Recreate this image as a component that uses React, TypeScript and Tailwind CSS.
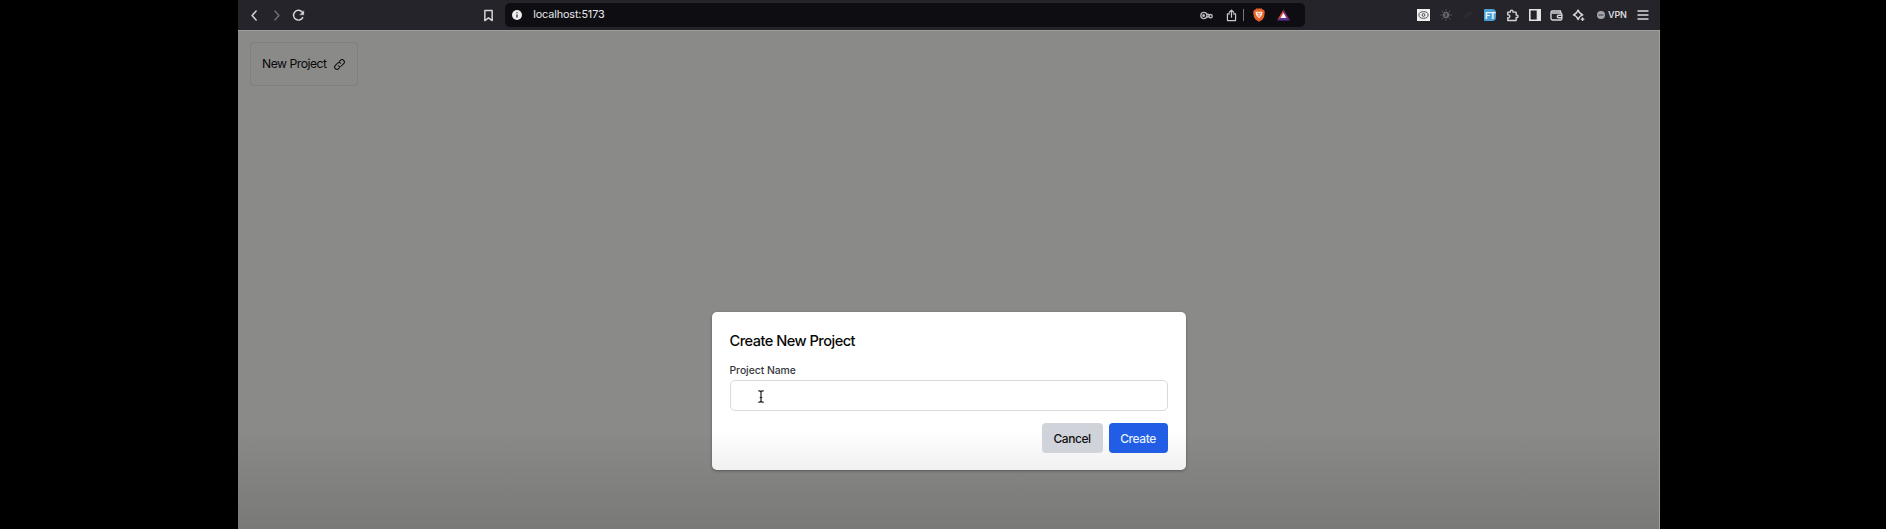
import type { ReactNode } from "react";

function Slot({ children }: { children?: ReactNode }) {
  return <span className="flex h-full w-[22.2px] shrink-0 items-center justify-center">{children}</span>;
}

function Stroke({ children, size = 13, width = 1.5, className = "" }: { children: ReactNode; size?: number; width?: number; className?: string }) {
  return (
    <svg width={size} height={size} viewBox="0 0 16 16" fill="none" stroke="currentColor" strokeWidth={width} strokeLinecap="round" strokeLinejoin="round" className={`shrink-0 ${className}`}>
      {children}
    </svg>
  );
}

function AddressBar() {
  return (
    <div className="ml-[6px] flex h-6 w-[800px] items-center rounded-[5px] bg-[#0e0d12] pl-[7px]">
      <svg width="10" height="10" viewBox="0 0 10 10" className="shrink-0">
        <circle cx="5" cy="5" r="5" fill="#ececee" />
        <path d="M5 4.4v3.1M5 2.3v1" stroke="#1a191f" strokeWidth="1.2" />
      </svg>
      <span className="ml-[11px] w-[661px] text-[10.8px] tracking-[-0.1px] text-[#e8e8ea]">localhost:5173</span>
      <span className="ml-[6px] flex items-center text-[#b6b6bb]">
        <Stroke size={13} width={1.7}>
          <circle cx="4.8" cy="8" r="3.8" />
          <circle cx="4.4" cy="8" r="1" />
          <path d="M8.4 6.4h1.8l1.200 1.200M8.400 9.800h1.500l1.300-1.300" />
          <circle cx="13" cy="8.8" r="2" />
        </Stroke>
      </span>
      <span className="ml-[12px] flex items-center text-[#c9c9cd]">
        <Stroke size={13}>
          <path d="M5.5 6H3v8.2h10V6h-2.500M8 10V1.500M5.300 4 8 1.400 10.700 4" />
        </Stroke>
      </span>
      <span className="ml-[5px] h-3 w-px bg-[#77777c]" />
      <svg width="12" height="14" viewBox="0 0 12 14" className="ml-[9px] shrink-0">
        <path d="M3.2.6h5.6l1 1.1 1.3.2.7 2.4-.7 4.8L9.3 11.8 6 13.7 2.7 11.8.9 9.1.2 4.3.9 1.9l1.3-.2z" fill="#e8622c" />
        <path d="M2.4 4.2 4 3.6l2 .4 2-.4 1.6.6-1 3.2-1.2 1.5L6 10.200 4.600 8.900 3.400 7.400z" fill="#fff1e8" />
        <path d="m4 5 1.400.5M8 5l-1.400.5M6 5v2.300M4.700 7.500 6 8.300l1.300-.8" stroke="#ef5b25" strokeWidth=".8" fill="none" />
      </svg>
      <svg width="13" height="12" viewBox="0 0 13 12" className="ml-[12px] shrink-0">
        <path d="M6.5.4V4.7L3.6 9 0 11.5z" fill="#e2483a" />
        <path d="M6.5.4 13 11.5 9.2 9 6.5 4.7z" fill="#8c2c74" />
        <path d="M0 11.5 3.6 9h5.6L13 11.5z" fill="#5a3195" />
        <path d="M6.5 3.8 9.4 9H3.6z" fill="#fff" />
      </svg>
    </div>
  );
}

function Extensions() {
  return (
    <div className="ml-[107.4px] flex h-full items-center text-[#d6d6da]">
      <Slot>
        <svg width="13" height="12" viewBox="0 0 13 12">
          <path d="M0 0h13v12H0z" fill="#f0f0f1" />
          <ellipse cx="6.5" cy="6" rx="4.6" ry="3.3" fill="none" stroke="#4d4d52" />
          <circle cx="6.5" cy="6" r="1.4" fill="none" stroke="#4d4d52" />
        </svg>
      </Slot>
      <Slot>
        <Stroke size={12} width={1.3} className="text-[#66666b]">
          <circle cx="8" cy="8" r="4" fill="#66666b" />
          <path d="M8 1v.5M8 14.5v.5M1 8h.5M14.5 8h.5M2.700 2.700l.8.800M12.500 12.500l.8.800M2.700 13.300l.8-.8M12.500 3.500l.8-.8" />
          <path d="M6.700 6.500h2.500L7.500 8c2 0 2 2-.8 1.700" stroke="#25242a" />
        </Stroke>
      </Slot>
      <Slot>
        <Stroke size={12} className="text-[#2c2b30]">
          <path d="m3 12 1-4 6-5 3 2-6 6z" fill="currentColor" />
        </Stroke>
      </Slot>
      <Slot>
        <span className="flex h-3 w-3 items-center justify-center rounded-l-[1px] rounded-r-[4px] bg-[#4a9fd3] text-[9px] leading-none font-bold tracking-[-0.5px] text-[#e9f6ff]">FT</span>
      </Slot>
      <Slot>
        <Stroke size={13} width={1.7}>
          <path d="M2.2 3.8h3.300c-1-3.200 4-3.200 3 0h4v3.700c3.100-.8 3.100 3.800 0 3v3.700H2.200v-3.400c3.300.6 3.300-4.200 0-3.600z" />
        </Stroke>
      </Slot>
      <Slot>
        <svg width="12" height="12" viewBox="0 0 12 12">
          <path d="M.8.8h10.400v10.400H.8z" fill="none" stroke="#e3e3e6" strokeWidth="1.6" />
          <path d="M7.7.8h3.500v10.400H7.700z" fill="#e3e3e6" />
        </svg>
      </Slot>
      <Slot>
        <Stroke size={13} width={1.7}>
          <path d="M13 5V2.5H3.200Q1.200 2.500 1.200 4.500v7q0 2 2 2H13q1.500 0 1.500-1.500V6.500Q14.500 5 13 5H3" />
          <path d="M14.500 7.700h-4q-1.500 0-1.500 1.500t1.500 1.600h4" />
        </Stroke>
      </Slot>
      <Slot>
        <Stroke size={13} width={1.7}>
          <path d="M7.5 1.3Q8.900 5.800 13.300 7.200 8.900 8.600 7.500 13 6.100 8.600 1.700 7.200 6.100 5.800 7.500 1.300z" />
          <path d="M13 11v3M11.5 12.5h3" />
        </Stroke>
      </Slot>
      <svg width="8" height="8" viewBox="0 0 8 8" className="ml-[7px] shrink-0">
        <circle cx="4" cy="4" r="4" fill="#a3a3a8" />
        <path d="M1.5 4h5" stroke="#3b3a40" />
      </svg>
      <span className="ml-[3px] w-[19px] text-[9px] font-semibold tracking-[-0.15px]">VPN</span>
      <svg width="12" height="10" viewBox="0 0 12 10" className="ml-[10px] shrink-0">
        <path d="M.5 1h11M.5 5h11M.5 9h11" stroke="#dadade" strokeWidth="1.3" />
      </svg>
    </div>
  );
}

function BrowserToolbar() {
  return (
    <header className="flex h-[30px] shrink-0 items-center bg-[#25242a] pl-[5px] text-[#d6d6da]">
      <Slot>
        <Stroke width={1.8}><path d="m10 2.500-5 5.500 5 5.500" /></Stroke>
      </Slot>
      <Slot>
        <Stroke width={1.5} className="text-[#747479]"><path d="m6 2.500 5 5.500-5 5.500" /></Stroke>
      </Slot>
      <Slot>
        <Stroke width={1.8}>
          <path d="M13.2 10.500a6 6 0 1 1-.7-6.700l1 1.200" />
          <path d="M14.500 2.500v4.700H9.800z" fill="currentColor" strokeWidth=".5" />
        </Stroke>
      </Slot>
      <div className="ml-[167.4px] flex">
        <Slot>
          <Stroke width={1.8}><path d="M3.5 1.8h9v12.500L8 11l-4.500 3.300z" /></Stroke>
        </Slot>
      </div>
      <AddressBar />
      <Extensions />
    </header>
  );
}

function TextCursor() {
  return (
    <svg width="8" height="13" viewBox="0 0 8 13" className="ml-[26px]">
      <path d="M1.3.8Q4 .6 4 2.5v8Q4 12.400 1.300 12.200M6.700.8Q4 .6 4 2.500M4 10.500q0 1.900 2.700 1.700M2.700 7.500h2.600" fill="none" stroke="#202020" strokeWidth="1.2" />
    </svg>
  );
}

function CreateProjectDialog() {
  return (
    <section role="dialog" className="mx-auto mt-[226px] flex h-[158px] w-[474px] shrink-0 flex-col rounded-[5px] bg-linear-to-b from-white from-75% to-[#f0f0f1] px-[18px] shadow-[0_1px_3px_rgba(0,0,0,0.35)]">
      <h2 className="mt-[18px] text-[14.6px] leading-[22px] font-medium tracking-[-0.52px] text-[#080808]">Create New Project</h2>
      <label htmlFor="project-name" className="mt-[11px] text-[10.4px] leading-[16px] font-medium tracking-[-0.05px] text-[#36373b]">Project Name</label>
      <div id="project-name" className="mt-px flex h-[31px] items-center rounded-[5px] border border-[#d9dade] bg-white pt-px">
        <TextCursor />
      </div>
      <div className="mt-[12px] flex justify-end gap-[6px] text-[12px] font-medium">
        <button className="h-[30px] w-[61px] rounded-[4px] bg-[#d1d3da] pt-px tracking-[-0.45px] text-[#101114]">Cancel</button>
        <button className="h-[30px] w-[59px] rounded-[4px] bg-[#225de5] pt-px tracking-[-0.45px] text-[#e4efff]">Create</button>
      </div>
    </section>
  );
}

export default function App() {
  return (
    <div className="flex h-[529px] overflow-hidden bg-black pl-[238px] font-['Inter','Liberation_Sans',sans-serif]">
      <div className="flex w-[1422px] shrink-0 flex-col">
        <BrowserToolbar />
        <main className="flex flex-1 flex-col border-t border-r border-[#a0a09e] bg-linear-to-b from-[#8a8a88] from-80% to-[#797977] pt-[11px]">
          <button className="ml-[12px] flex h-[44px] w-[108px] shrink-0 items-center gap-[6px] rounded-[4px] border border-[#7f7f7f] pl-[11px] text-[12.2px] tracking-[-0.5px] text-[#090909]">
            <span className="w-[66px] pt-px text-left whitespace-nowrap">New Project</span>
            <Stroke size={11} width={1.5}>
              <path d="M6.3 9.8a3.3 3.3 0 0 0 4.7 0l3-3A3.300 3.300 0 0 0 9.300 2L8 3.300" />
              <path d="M9.700 6.200a3.300 3.300 0 0 0-4.700 0l-3 3A3.300 3.300 0 0 0 6.700 14L8 12.700" />
            </Stroke>
          </button>
          <CreateProjectDialog />
        </main>
      </div>
    </div>
  );
}
